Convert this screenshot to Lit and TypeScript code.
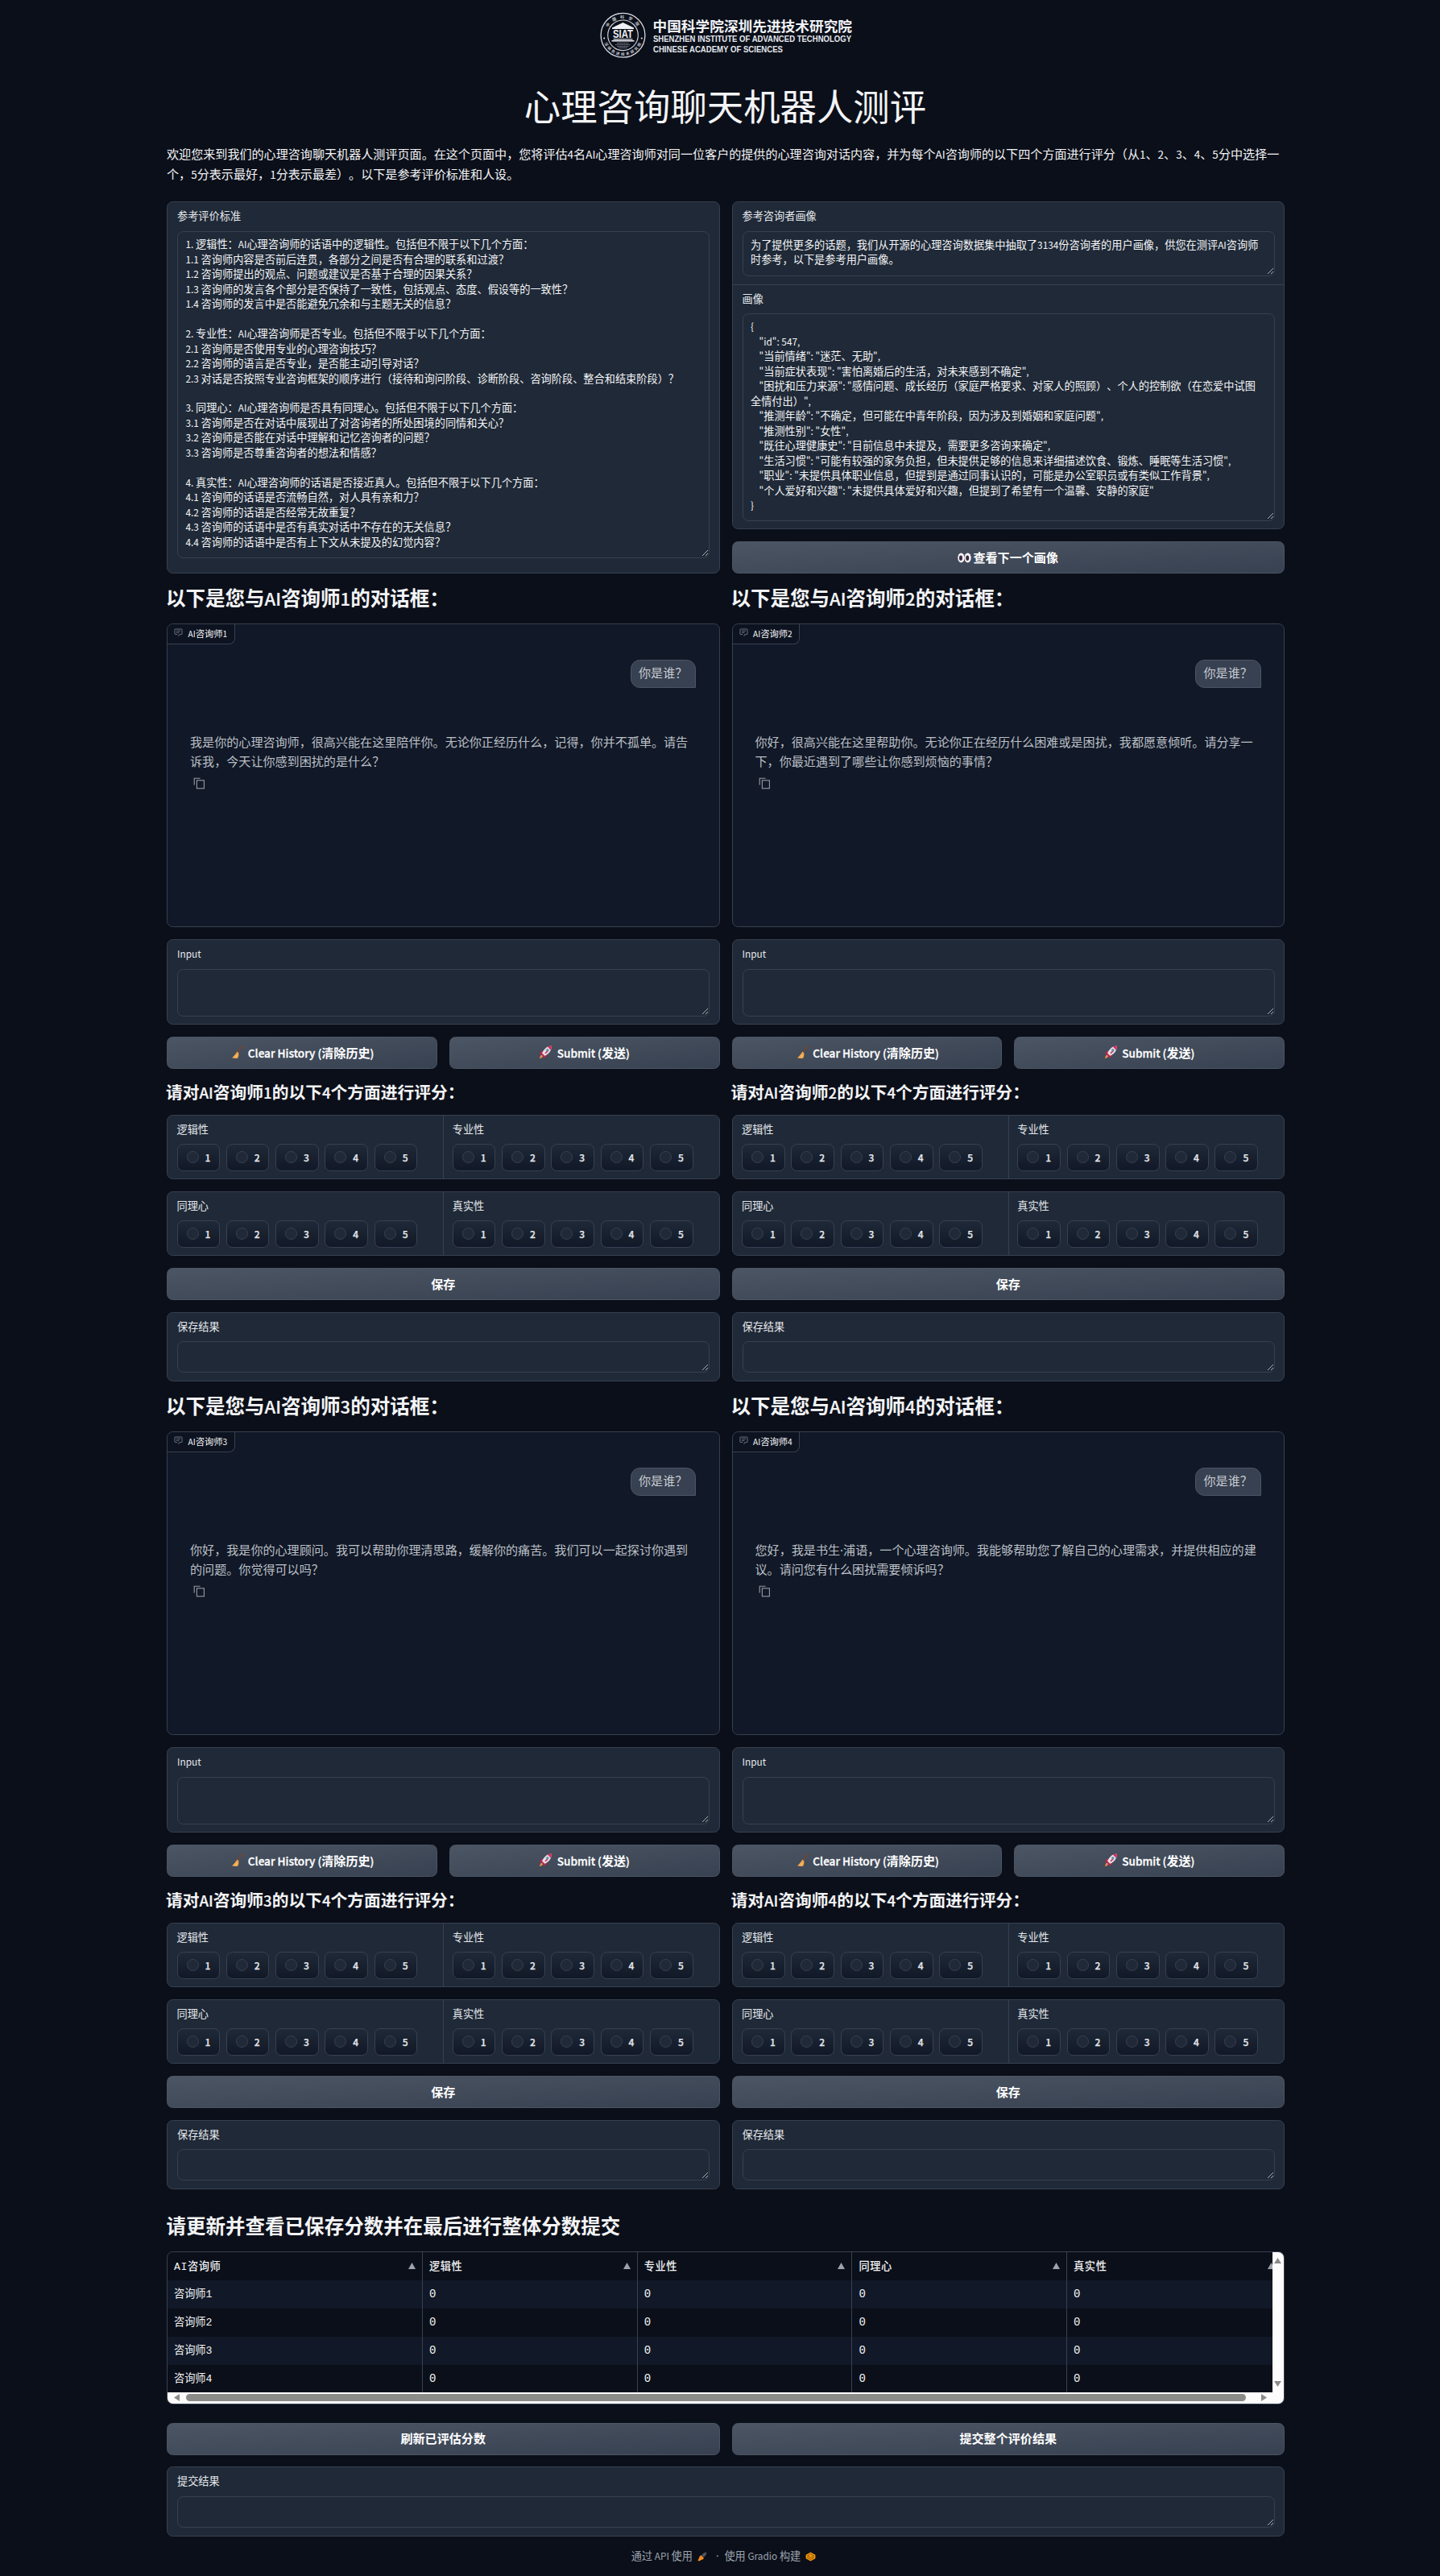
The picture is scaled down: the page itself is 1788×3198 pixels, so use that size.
import { LitElement, html, css, nothing } from "lit";
import { customElement, property } from "lit/decorators.js";

/** Latin runs are set slightly smaller than the Chinese text around them. */
const mix = (s: string) =>
  s.split(/([\x20-\x7e]+|·)/).map((p) =>
    p === "·" ? html`<span class="mid">·</span>` : /^[\x20-\x7e]+$/.test(p) ? html`<span class="lat">${p}</span>` : p);

/** One block per line of text; an empty line keeps its height. */
const lines = (s: string) => s.split("\n").map((l) => html`<div class="line">${mix(l)}</div>`);

const base = css`
  * { box-sizing: border-box; }
  .lat { font-size: 0.897em; }
  .mid { font-family: "Noto Sans", sans-serif; }
`;

const grip = html`<svg class="grip" width="9" height="9" viewBox="0 0 9 9">
  <path d="M1 8 L8 1 M5 8 L8 5" stroke="#b9bdc4" stroke-width="0.9" fill="none" />
</svg>`;

const broom = html`<svg width="17" height="18" viewBox="0 0 17 18">
  <path d="M15.4 1.4 L10.4 9.4" stroke="#7a4426" stroke-width="1.5" stroke-linecap="round" />
  <path d="M9.4 8.4 L11.4 10.2 C11.6 13 11 15 10.2 16.8 C7.6 17 5 16.8 3 16.2 C5.6 14 7.8 11 9.4 8.4 Z" fill="#eda24a" />
  <path d="M5.4 16 L9 12.4 M8 16.4 L10 13" stroke="#f9cf7c" stroke-width="0.8" fill="none" />
</svg>`;

const rocket = html`<svg width="17" height="18" viewBox="0 0 17 18">
  <path d="M5 7.5 C2.8 7.7 1.6 9.6 1.4 12 L5 11 Z M10 12.6 C9.8 14.8 8 16 5.6 16.4 L6.6 12.6 Z" fill="#c2224e" />
  <path d="M15.8 1.4 C11 1.4 6.4 4.6 4 10.6 L7 13.8 C12.6 11.6 16 7 15.8 1.4 Z" fill="#e3dde4" />
  <path d="M15.8 1.4 C14 1.4 12.4 1.8 10.8 2.6 L14.8 6.6 C15.6 5 15.9 3.2 15.8 1.4 Z" fill="#e0295a" />
  <path d="M8 10.8 L11.4 7.4" stroke="#d62a58" stroke-width="1.6" />
  <path d="M4 10.6 L7 13.8 L5.4 14.6 L3 12.2 Z" fill="#c2224e" />
  <circle cx="10.8" cy="6.8" r="1.7" fill="#5d8fae" />
  <path d="M3.4 12.4 L5.2 14.2 C4.4 15.8 2.8 16.8 1 17 C1.2 15 1.8 13.4 3.4 12.4 Z" fill="#f0894a" />
</svg>`;

const eyes = html`<svg width="17" height="17" viewBox="0 0 17 17">
  <ellipse cx="4.4" cy="9.5" rx="4.1" ry="6" fill="#f6f4f8" />
  <ellipse cx="12.6" cy="9.5" rx="4.1" ry="6" fill="#f6f4f8" />
  <ellipse cx="4" cy="9.8" rx="2" ry="3.3" fill="#3b2a3f" />
  <ellipse cx="12.2" cy="9.8" rx="2" ry="3.3" fill="#3b2a3f" />
</svg>`;

const icons: Record<string, unknown> = { broom, rocket, eyes };

@customElement("ui-button")
class UiButton extends LitElement {
  @property() label = "";
  @property() icon = "";
  static styles = [base, css`
    :host { display: block; flex: 1; min-width: 0; }
    .btn {
      height: 40px; display: flex; align-items: center; justify-content: center; width: 100%;
      border: 1px solid #4b5563; border-radius: 7.5px; padding: 0 0 2px;
      background: linear-gradient(to bottom right, #4b5563, #374151);
      color: #fff; font: inherit; font-size: 15.08px; font-weight: 700; white-space: pre;
    }
    .lat { font-weight: 500; -webkit-text-stroke: 0.3px #fff; font-size: 0.9em; }
    .wide svg { margin-right: 5.5px; }
    .tight svg { margin-right: 2px; }
    svg { flex: none; }
  `];
  render() {
    return html`<button class="btn ${this.icon === "eyes" ? "tight" : "wide"}">${this.icon ? icons[this.icon] : nothing}<span>${mix(this.label)}</span></button>`;
  }
}

@customElement("text-field")
class TextField extends LitElement {
  @property() label = "";
  @property() value = "";
  static styles = [base, css`
    :host { display: flex; flex-direction: column; padding: 8px 11.5px 10px 12px; color: #f3f4f6; font-size: 13.2px; }
    .label { line-height: 18.5px; color: #e5e7eb; margin-bottom: 9px; }
    .area {
      position: relative; flex: 1; border: 1px solid #374151; border-radius: 7.5px; padding: 0 9.5px 2.5px;
      line-height: 18.48px; white-space: pre; display: flex; align-items: center;
    }
    .line { height: 18.48px; }
    .grip { position: absolute; right: 0; bottom: 1px; }
  `];
  render() {
    return html`<div class="label">${mix(this.label)}</div><div class="area">${this.value ? html`<div>${lines(this.value)}</div>` : nothing}${grip}</div>`;
  }
}

@customElement("rating-pair")
class RatingPair extends LitElement {
  @property({ attribute: false }) labels: string[] = [];
  static styles = [base, css`
    :host { display: flex; height: 80px; border: 1px solid #374151; border-radius: 7.5px; background: #1f2937; color: #e5e7eb; font-size: 13.2px; }
    .half { flex: 1; padding: 7.5px 0 0 11.5px; }
    .half + .half { border-left: 1px solid #374151; padding-left: 10.5px; }
    .label { line-height: 18.5px; margin-bottom: 9px; }
    .row { display: flex; gap: 7.6px; }
    .chip {
      width: 53.7px; height: 33.5px; border: 1px solid #374151; border-radius: 7.5px; display: flex; align-items: center;
      padding-left: 11px; gap: 8px; background: linear-gradient(to bottom, #1f2937, #111827);
    }
    .dot { width: 15px; height: 15px; border-radius: 50%; border: 1px solid #374151; background: #1f2937; }
    .num { font-size: 12px; font-weight: 500; -webkit-text-stroke: 0.25px #e5e7eb; padding-bottom: 1.5px; }
  `];
  render() {
    return this.labels.map((l) => html`<div class="half">
      <div class="label">${l}</div>
      <div class="row">${[1, 2, 3, 4, 5].map((n) => html`<div class="chip"><span class="dot"></span><span class="num">${n}</span></div>`)}</div>
    </div>`);
  }
}

@customElement("counselor-panel")
class CounselorPanel extends LitElement {
  @property({ type: Number }) index = 1;
  @property() reply = "";
  static styles = [base, css`
    :host { display: flex; flex-direction: column; color: #f3f4f6; min-width: 0; }
    .h2 { height: 62px; display: flex; align-items: center; font-size: 24.52px; font-weight: 700; padding-bottom: 3px; margin-left: -1px; }
    .h3 { height: 57px; display: flex; align-items: center; font-size: 20.75px; font-weight: 700; padding-bottom: 2px; margin-left: -1px; }
    .h2 .lat, .h3 .lat { font-weight: 500; -webkit-text-stroke: 0.2px #f3f4f6; }
    .chat { height: 377px; border: 1px solid #374151; border-radius: 7.5px; background: #111827; display: flex; flex-direction: column; }
    .tab {
      align-self: flex-start; height: 24.5px; width: 83.5px; border: solid #374151; border-width: 0 1px 1px 0; border-radius: 7.5px 0 7.5px 0;
      display: flex; align-items: center; padding: 0 0 2px 8px; gap: 6.5px; font-size: 11.31px; background: #0d1320; white-space: nowrap;
    }
    .bubble {
      align-self: flex-end; margin: 19px 28.5px 0 0; width: 81.5px; height: 35px; padding: 0 0 2.5px 9.5px; display: flex; align-items: center;
      border: 1px solid #4b5563; border-radius: 11.5px 11.5px 0 11.5px; background: #374151; font-size: 15.08px; color: #c9ccd2;
    }
    .reply { margin: 55px 0 0 28px; font-size: 15.08px; line-height: 24.3px; color: #bcc0c7; white-space: pre; }
    .copy { margin: 8px 0 0 32px; display: block; }
    .field { background: #1f2937; border: 1px solid #374151; border-radius: 7.5px; }
    .input { height: 106px; margin: 15px 0; padding-bottom: 9.5px; }
    .buttons { display: flex; gap: 15px; }
    .second { margin: 15px 0; }
    .result { height: 86.5px; margin-top: 14.5px; padding-bottom: 10px; }
  `];
  render() {
    const n = this.index;
    return html`
      <div class="h2"><span>${mix(`以下是您与AI咨询师${n}的对话框：`)}</span></div>
      <div class="chat">
        <div class="tab">
          <svg width="11" height="11" viewBox="0 0 11 11" fill="none" stroke="#6b7280" stroke-width="1">
            <path d="M1.5 1 H9.5 Q10 1 10 1.5 V7 Q10 7.6 9.5 7.6 H6.8 L5.6 10 M1.5 1 Q1 1 1 1.5 V7 Q1 7.6 1.5 7.6 H4.2 M3 3.3 H8 M3 5.4 H6.5" />
          </svg>
          <span>${mix(`AI咨询师${n}`)}</span>
        </div>
        <div class="bubble">你是谁？</div>
        <div class="reply">${lines(this.reply)}</div>
        <svg class="copy" width="15" height="15" viewBox="0 0 15 15" fill="none" stroke="#969ba5" stroke-width="1.1">
          <path d="M1.2 9.6 V1.2 H8.6" /><rect x="4.4" y="3.8" width="9" height="10" />
        </svg>
      </div>
      <text-field class="field input" label="Input"></text-field>
      <div class="buttons">
        <ui-button icon="broom" label="Clear History (清除历史)"></ui-button>
        <ui-button icon="rocket" label="Submit (发送)"></ui-button>
      </div>
      <div class="h3"><span>${mix(`请对AI咨询师${n}的以下4个方面进行评分：`)}</span></div>
      <rating-pair .labels=${["逻辑性", "专业性"]}></rating-pair>
      <rating-pair class="second" .labels=${["同理心", "真实性"]}></rating-pair>
      <ui-button label="保存"></ui-button>
      <text-field class="field result" label="保存结果"></text-field>
    `;
  }
}

@customElement("score-table")
class ScoreTable extends LitElement {
  static styles = [base, css`
    :host {
      display: grid; grid-template-columns: minmax(0, 1fr) 14.5px; grid-template-rows: 174px 1fr; height: 189.5px;
      border: 1px solid #374151; border-radius: 7.5px; overflow: hidden; color: #f3f4f6; font-size: 13.2px;
      font-family: "Liberation Mono", "Noto Sans CJK SC", monospace;
    }
    .view { overflow: hidden; }
    .row { display: grid; grid-template-columns: 317px 266.7px 266.7px 266.7px 266.7px; height: 35px; }
    .row.head { height: 34.5px; letter-spacing: 0.6px; }
    .row.odd { background: #111827; }
    .cell { display: flex; align-items: center; justify-content: space-between; padding: 0 8px 2.5px; border-right: 1px solid #374151; }
    .num { font-size: 14px; padding-bottom: 1px; }
    .head .cell { font-weight: 500; }
    .head svg { position: relative; top: 1px; }
    .vbar, .hbar { background: #fcfcfc; }
    .vbar { display: flex; flex-direction: column; justify-content: space-between; align-items: center; padding: 7px 0; }
    .hbar { grid-column: 1 / 3; display: flex; align-items: center; padding: 0 21px 0 8px; }
    .thumb { flex: 1; height: 9px; border-radius: 4.5px; background: #8b8b8a; margin: 0 19px 0 8px; }
  `];
  render() {
    const tri = (d: string, w: number, h: number, c = "#8b8b8a") =>
      html`<svg width=${w} height=${h} viewBox="0 0 ${w} ${h}"><path d=${d} fill=${c} /></svg>`;
    return html`
      <div class="view">
        <div class="row head">${["AI咨询师", "逻辑性", "专业性", "同理心", "真实性"].map(
          (h) => html`<div class="cell"><span>${h}</span>${tri("M4.5 0 L9 8 H0 Z", 9, 8, "#9ca3af")}</div>`)}</div>
        ${[1, 2, 3, 4].map((n) => html`<div class="row ${n % 2 ? "odd" : ""}">
          <div class="cell">咨询师${n}</div>
          ${[0, 0, 0, 0].map((v) => html`<div class="cell num">${v}</div>`)}</div>`)}
      </div>
      <div class="vbar">${tri("M4.5 0 L9 7 H0 Z", 9, 7)}${tri("M4.5 7 L9 0 H0 Z", 9, 7)}</div>
      <div class="hbar">${tri("M0 4.5 L7 0 V9 Z", 7, 9)}<div class="thumb"></div>${tri("M7 4.5 L0 0 V9 Z", 7, 9)}</div>
    `;
  }
}

const CRITERIA = `1. 逻辑性：AI心理咨询师的话语中的逻辑性。包括但不限于以下几个方面：
1.1 咨询师内容是否前后连贯，各部分之间是否有合理的联系和过渡？
1.2 咨询师提出的观点、问题或建议是否基于合理的因果关系？
1.3 咨询师的发言各个部分是否保持了一致性，包括观点、态度、假设等的一致性？
1.4 咨询师的发言中是否能避免冗余和与主题无关的信息？

2. 专业性：AI心理咨询师是否专业。包括但不限于以下几个方面：
2.1 咨询师是否使用专业的心理咨询技巧？
2.2 咨询师的语言是否专业，是否能主动引导对话？
2.3 对话是否按照专业咨询框架的顺序进行（接待和询问阶段、诊断阶段、咨询阶段、整合和结束阶段）？

3. 同理心：AI心理咨询师是否具有同理心。包括但不限于以下几个方面：
3.1 咨询师是否在对话中展现出了对咨询者的所处困境的同情和关心？
3.2 咨询师是否能在对话中理解和记忆咨询者的问题？
3.3 咨询师是否尊重咨询者的想法和情感？

4. 真实性：AI心理咨询师的话语是否接近真人。包括但不限于以下几个方面：
4.1 咨询师的话语是否流畅自然，对人具有亲和力？
4.2 咨询师的话语是否经常无故重复？
4.3 咨询师的话语中是否有真实对话中不存在的无关信息？
4.4 咨询师的话语中是否有上下文从未提及的幻觉内容？`;

const PERSONA_NOTE = `为了提供更多的话题，我们从开源的心理咨询数据集中抽取了3134份咨询者的用户画像，供您在测评AI咨询师
时参考，以下是参考用户画像。`;

const PERSONA = `{
    "id": 547,
    "当前情绪": "迷茫、无助",
    "当前症状表现": "害怕离婚后的生活，对未来感到不确定",
    "困扰和压力来源": "感情问题、成长经历（家庭严格要求、对家人的照顾）、个人的控制欲（在恋爱中试图
全情付出）",
    "推测年龄": "不确定，但可能在中青年阶段，因为涉及到婚姻和家庭问题",
    "推测性别": "女性",
    "既往心理健康史": "目前信息中未提及，需要更多咨询来确定",
    "生活习惯": "可能有较强的家务负担，但未提供足够的信息来详细描述饮食、锻炼、睡眠等生活习惯",
    "职业": "未提供具体职业信息，但提到是通过同事认识的，可能是办公室职员或有类似工作背景",
    "个人爱好和兴趣": "未提供具体爱好和兴趣，但提到了希望有一个温馨、安静的家庭"
}`;

const INTRO = `欢迎您来到我们的心理咨询聊天机器人测评页面。在这个页面中，您将评估4名AI心理咨询师对同一位客户的提供的心理咨询对话内容，并为每个AI咨询师的以下四个方面进行评分（从1、2、3、4、5分中选择一
个，5分表示最好，1分表示最差）。以下是参考评价标准和人设。`;

const REPLIES = [
  "我是你的心理咨询师，很高兴能在这里陪伴你。无论你正经历什么，记得，你并不孤单。请告\n诉我，今天让你感到困扰的是什么？",
  "你好，很高兴能在这里帮助你。无论你正在经历什么困难或是困扰，我都愿意倾听。请分享一\n下，你最近遇到了哪些让你感到烦恼的事情？",
  "你好，我是你的心理顾问。我可以帮助你理清思路，缓解你的痛苦。我们可以一起探讨你遇到\n的问题。你觉得可以吗？",
  "您好，我是书生·浦语，一个心理咨询师。我能够帮助您了解自己的心理需求，并提供相应的建\n议。请问您有什么困扰需要倾诉吗？",
];

const logo = html`<svg class="logo" width="322" height="58" viewBox="0 0 322 58">
  <defs>
    <path id="arc-top" d="M7.6 29 A20.9 20.9 0 0 1 49.4 29" />
    <path id="arc-bottom" d="M3.6 29 A24.9 24.9 0 0 0 53.4 29" />
  </defs>
  <g fill="none" stroke="#d7dae2">
    <circle cx="28.5" cy="28.8" r="27.4" stroke-width="1.3" />
    <circle cx="28.5" cy="28.8" r="18.8" stroke-width="1.1" />
  </g>
  <g fill="#c3c7d0" font-size="5" font-weight="700" text-anchor="middle">
    <text letter-spacing="4.6"><textPath href="#arc-top" startOffset="52%">中国科学院</textPath></text>
    <text font-size="4.6" letter-spacing="2"><textPath href="#arc-bottom" startOffset="51%">深圳先进技术研究院</textPath></text>
  </g>
  <g fill="#eef0f5">
    <path d="M28.5 13 L42 19.4 V21 H15 V19.4 Z" />
    <rect x="16.5" y="33.2" width="24" height="1.2" />
    <rect x="14.5" y="35" width="28" height="1.5" />
    <circle cx="5.2" cy="32.6" r="1" /><circle cx="51.8" cy="32.6" r="1" />
    <text x="16" y="32.4" font-size="14" font-weight="700" textLength="25" lengthAdjust="spacingAndGlyphs" font-family="Liberation Sans, sans-serif">SIAT</text>
  </g>
  <path d="M21 38.6 H36 M19 40.6 H38 M21 42.6 H36 M23 44.4 H34" stroke="#8f95a3" stroke-width="0.9" stroke-dasharray="1.6 0.5" />
  <g fill="#f1f3f7" font-weight="700">
    <text x="65.5" y="24" font-size="17.6" textLength="247.5" lengthAdjust="spacingAndGlyphs">中国科学院深圳先进技术研究院</text>
    <g font-family="Liberation Sans, sans-serif" font-size="11" fill="#e4e7ed">
      <text x="66" y="37" textLength="246" lengthAdjust="spacingAndGlyphs">SHENZHEN INSTITUTE OF ADVANCED TECHNOLOGY</text>
      <text x="66" y="49.5" textLength="161" lengthAdjust="spacingAndGlyphs">CHINESE ACADEMY OF SCIENCES</text>
    </g>
  </g>
</svg>`;

@customElement("app-root")
class AppRoot extends LitElement {
  static styles = [base, css`
    :host {
      display: block; width: 100%; height: 3198px; background: #0b0f19; color: #f3f4f6; overflow: hidden;
      font-family: "Noto Sans CJK SC", sans-serif; text-spacing-trim: space-all; text-autospace: no-autospace;
    }
    .page { width: 1388px; margin-left: 207px; display: flex; flex-direction: column; }
    .logo { margin: 14.5px 0 0 537.5px; display: block; }
    .title { height: 106.5px; display: flex; align-items: center; justify-content: center; font-size: 45.4px; font-weight: 400; padding: 8px 1px 0 0; white-space: nowrap; }
    .intro { height: 71px; font-size: 15.08px; line-height: 24.6px; white-space: pre; }
    .cols { display: grid; grid-template-columns: minmax(0, 1fr) minmax(0, 1fr); column-gap: 15px; }
    .panel { background: #1f2937; border: 1px solid #374151; border-radius: 7.5px; }
    .criteria { height: 462px; padding-bottom: 18.5px; }
    .side { display: flex; flex-direction: column; }
    .persona { height: 407px; margin-bottom: 15px; display: flex; flex-direction: column; }
    .note { height: 101.5px; padding-bottom: 10px; }
    .data { flex: 1; border-top: 1px solid #374151; padding-bottom: 9.5px; }
    .h2 { height: 77px; padding-top: 11px; display: flex; align-items: center; font-size: 24.52px; font-weight: 700; margin-left: -0.5px; }
    .actions { margin: 23px 0 14.5px; }
    .submit { height: 86.5px; }
    .footer { height: 50px; display: flex; align-items: center; justify-content: center; font-size: 13.2px; color: #9ca3af; padding: 0 5px 2px 0; white-space: pre; }
    .footer svg { margin: 2px 0 0 6px; }
    .sep { margin: 0 7px 0 11px; font-family: "Noto Sans", sans-serif; }
  `];
  render() {
    const panel = (i: number) => html`<counselor-panel .index=${i} .reply=${REPLIES[i - 1]}></counselor-panel>`;
    return html`<div class="page" lang="zh-CN">
      ${logo}
      <div class="title">心理咨询聊天机器人测评</div>
      <div class="intro">${lines(INTRO)}</div>
      <div class="cols">
        <text-field class="panel criteria" label="参考评价标准" .value=${CRITERIA}></text-field>
        <div class="side">
          <div class="panel persona">
            <text-field class="note" label="参考咨询者画像" .value=${PERSONA_NOTE}></text-field>
            <text-field class="data" label="画像" .value=${PERSONA}></text-field>
          </div>
          <ui-button icon="eyes" label="查看下一个画像"></ui-button>
        </div>
      </div>
      <div class="cols">${panel(1)}${panel(2)}</div>
      <div class="cols">${panel(3)}${panel(4)}</div>
      <div class="h2">请更新并查看已保存分数并在最后进行整体分数提交</div>
      <score-table></score-table>
      <div class="cols actions">
        <ui-button label="刷新已评估分数"></ui-button>
        <ui-button label="提交整个评价结果"></ui-button>
      </div>
      <text-field class="panel submit" label="提交结果"></text-field>
      <div class="footer">
        <span>${mix("通过 API 使用")}</span>
        <svg width="12" height="12" viewBox="0 0 12 12">
          <path d="M11.4 0.6 C8.6 0.8 6.6 2 5.2 4.4 L7.6 6.8 C10 5.4 11.2 3.4 11.4 0.6 Z" fill="#4b5563" />
          <path d="M4.6 4.2 L7.8 7.4 C7.8 9.4 6 9.6 5 9.8 C4 11 2.4 11.4 0.6 11.6 C1 9.8 1.2 8.4 2.2 7.2 C2.4 5.6 3.2 4.6 4.6 4.2 Z" fill="#f58a1f" />
        </svg>
        <span class="sep">·</span>
        <span>${mix("使用 Gradio 构建")}</span>
        <svg width="13" height="12" viewBox="0 0 13 12">
          <path d="M6.5 0.4 L12.4 3.8 V8.2 L6.5 11.6 L0.6 8.2 V3.8 Z" fill="#f59a0b" />
          <path d="M2.4 5 L6.5 2.6 L10.6 5 L6.5 7.2 Z M2 7 L6.5 9.6 L11 7" fill="none" stroke="#7a4a06" stroke-width="0.9" />
        </svg>
      </div>
    </div>`;
  }
}
